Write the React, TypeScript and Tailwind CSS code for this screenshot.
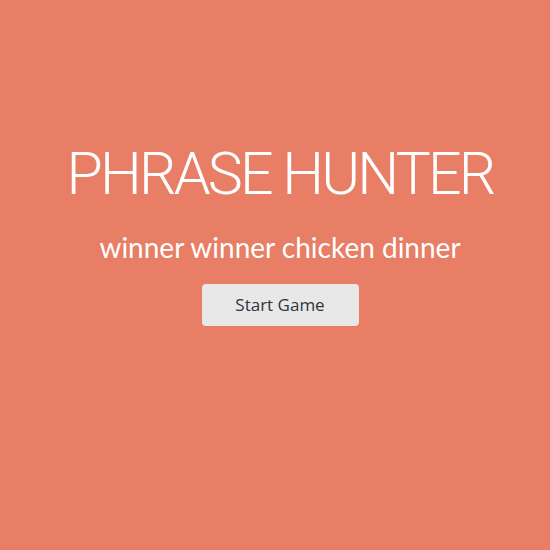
export default function App() {
  return (
    <div className="min-h-[550px] w-full bg-[#e77e65] flex flex-col items-center pt-[136px] pl-[10px] font-['Lato',sans-serif] text-white">
      <h1 className="text-[59px] leading-[76px] font-light tracking-[-2.8px] font-['Roboto',sans-serif]">PHRASE HUNTER</h1>
      <h2 className="mt-[17px] text-[28px] leading-[36px] font-normal">winner winner chicken dinner</h2>
      <button className="mt-[19px] w-[157px] h-[42px] rounded-[4px] bg-[#e8e8e8] text-[#2d3540] text-[17px] font-['Open_Sans',sans-serif]">
        Start Game
      </button>
    </div>
  );
}
